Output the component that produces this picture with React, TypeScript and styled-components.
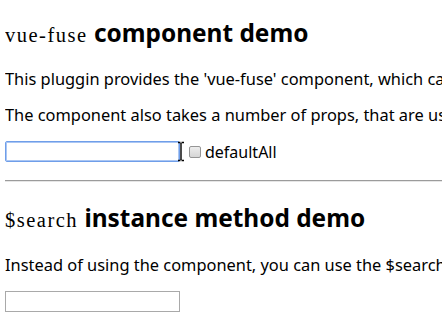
import React from "react";
import styled, { createGlobalStyle } from "styled-components";

const Global = createGlobalStyle`
  html, body { background: #fff; }
  body {
    margin: 5px;
    font-family: "Noto Sans", "Open Sans", sans-serif;
    font-size: 16.4px;
    color: #000;
    overflow: hidden;
  }
`;

const Page = styled.div`
  width: 700px;
`;

const Title = styled.h2<{ $top?: number; $bottom?: number }>`
  font-family: "Noto Sans", sans-serif;
  font-size: 24.4px;
  font-weight: 700;
  line-height: 28px;
  margin: ${(p) => p.$top ?? 20}px 0 ${(p) => p.$bottom ?? 20}px;
  white-space: nowrap;
`;

const Code = styled.code`
  font-family: "Liberation Serif", serif;
  font-weight: 400;
  font-size: 20.5px;
  letter-spacing: 1.5px;
`;

const Para = styled.p`
  margin: 16px 0;
  line-height: 20px;
  white-space: nowrap;
`;

const Row = styled.div`
  margin: 16px 0;
  display: flex;
  align-items: center;
  height: 21px;
  position: relative;
`;

const TextInput = styled.input<{ $focused?: boolean }>`
  box-sizing: border-box;
  width: 175px;
  height: 21px;
  margin: 0;
  padding: 1px 2px;
  font: inherit;
  border: 1px solid ${(p) => (p.$focused ? "#6f9ee9" : "#a9a9a9")};
  border-radius: ${(p) => (p.$focused ? "2px" : "0")};
  box-shadow: ${(p) => (p.$focused ? "inset 0 0 0 1px #aac6f3" : "none")};
  outline: none;
  background: #fff;
`;

const CheckLabel = styled.label`
  display: flex;
  align-items: center;
  margin-left: 9px;
  font-size: 16px;
  line-height: 20px;
`;

const Box = styled.input`
  appearance: none;
  box-sizing: border-box;
  width: 12px;
  height: 12px;
  margin: 0 4px 0 0;
  border: 1px solid #959595;
  border-radius: 2px;
  background: linear-gradient(#ededed, #d6d6d6);
`;

const Cursor = styled.svg`
  position: absolute;
  left: 172px;
  top: 0;
`;

const Rule = styled.hr`
  margin: 18px 0 0;
  border: 0;
  border-top: 1px solid #9b9b9b;
  border-bottom: 1px solid #e6e6e6;
  width: 460px;
`;

export default function App() {
  return (
    <Page>
      <Global />
      <Title $top={14}>
        <Code>vue-fuse</Code> component demo
      </Title>
      <Para>
        This pluggin provides the 'vue-fuse' component, which can be used to search an array of objects.
      </Para>
      <Para>
        The component also takes a number of props, that are used to configure the search.
      </Para>
      <Row>
        <TextInput $focused />
        <Cursor width="8" height="21" viewBox="0 0 8 21">
          <path
            d="M1 1.5h2.5M4.5 1.5h2.5M4 2v17M1 19.5h2.5M4.5 19.5h2.5"
            stroke="#000"
            strokeWidth="1.4"
            fill="none"
          />
        </Cursor>
        <CheckLabel>
          <Box type="checkbox" />
          defaultAll
        </CheckLabel>
      </Row>
      <Rule />
      <Title $top={22} $bottom={21}>
        <Code>$search</Code> instance method demo
      </Title>
      <Para>
        Instead of using the component, you can use the $search instance method.
      </Para>
      <Row>
        <TextInput />
      </Row>
    </Page>
  );
}
